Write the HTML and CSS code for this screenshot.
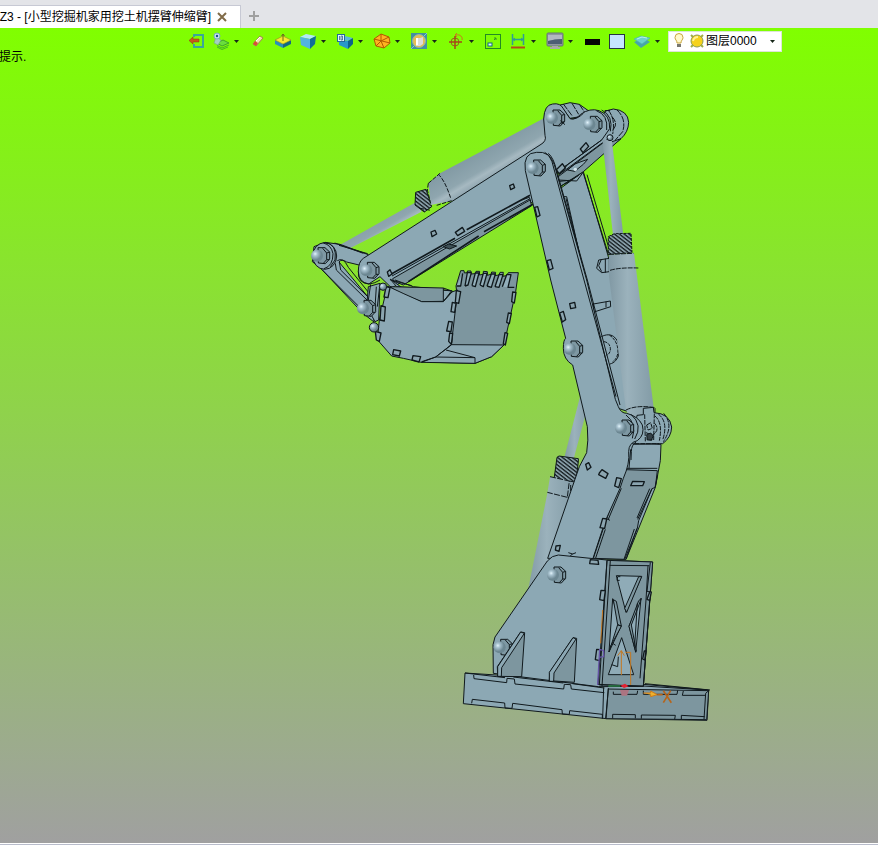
FILE: index.html
```html
<!DOCTYPE html>
<html lang="zh-CN">
<head>
<meta charset="utf-8">
<title>Z3</title>
<link rel="stylesheet" href="styles.css">
</head>
<body>
<header class="tabbar">
  <div class="tab"><span class="tab-title">Z3 - [小型挖掘机家用挖土机摆臂伸缩臂]</span>
    <button class="tab-close" aria-label="关闭"><svg width="10" height="10" viewBox="0 0 10 10"><path d="M1 1L9 9M9 1L1 9" stroke="#806b48" stroke-width="2"/></svg></button>
  </div>
  <button class="tab-add" aria-label="新建"><svg width="12" height="12" viewBox="0 0 12 12"><path d="M6 1V11M1 6H11" stroke="#a0a0a0" stroke-width="2"/></svg></button>
</header>
<main class="viewport">
  <nav class="toolbar">
    <button class="tool" aria-label="退出"><svg class="icon" viewBox="0 0 18 18"><path d="M7 5V3H16V15H7V12" fill="none" stroke="#3aa79a" stroke-width="2"/><path d="M2 8.500L6 5V7H12V10H6V12Z" fill="#c6571c" stroke="#8d3a10" stroke-width=".5"/></svg></button>
    <button class="tool menu" aria-label="管理器"><svg class="icon" viewBox="0 0 18 18"><path d="M5 11L11 8L17 11L10 14Z" fill="#6ade3c" stroke="#3fa52c"/><path d="M5 13.500L10 16L17 13M5 15L10 17.500L16 15" fill="none" stroke="#46b32c"/><path d="M4 5L2 11L6 13L9 8Z" fill="#a5cfc0" stroke="#6da888" stroke-width=".6"/><circle cx="5" cy="4" r="3" fill="#c9e3ed" stroke="#76acc0"/><circle cx="5" cy="4" r="1.200" fill="#164e83"/></svg><svg class="caret" viewBox="0 0 5 3"><path d="M0 0H5L2.500 3Z"/></svg></button>
    <button class="tool" aria-label="擦除"><svg class="icon" viewBox="0 0 18 18"><path d="M4 12L11 4L14 6L7 14Z" fill="#efe0ae" stroke="#a38254"/><path d="M4 12L6 9L9 11L7 14Z" fill="#d75034"/><path d="M7 9L11 5" stroke="#fff"/></svg></button>
    <button class="tool" aria-label="剖面"><svg class="icon" viewBox="0 0 18 18"><path d="M1 8L9 12V16L1 12Z" fill="#2890bb"/><path d="M9 12L17 8V12L9 16Z" fill="#126886"/><path d="M1 8L9 4L17 8L9 12Z" fill="#f8e92e" stroke="#928429" stroke-width=".6"/><path d="M9 9V2M7.500 4L9 2L10.500 4" fill="none" stroke="#6c6723"/></svg></button>
    <button class="tool menu" aria-label="着色"><svg class="icon" viewBox="0 0 18 18"><path d="M1 5L7 2L17 4L11 7Z" fill="#b2e8fa"/><path d="M1 5L11 7V17L2 13Z" fill="#52b4df"/><path d="M11 7L17 4L16 12L11 17Z" fill="#116d98"/></svg><svg class="caret" viewBox="0 0 5 3"><path d="M0 0H5L2.500 3Z"/></svg></button>
    <button class="tool menu" aria-label="视图"><svg class="icon" viewBox="0 0 18 18"><path d="M3 7L9 4L17 6L12 9Z" fill="#5cb9da"/><path d="M3 8L12 9V17L3 13Z" fill="#2898cb"/><path d="M12 9L17 6V12L12 17Z" fill="#0d628c"/><rect x="1.500" y="2.500" width="7" height="7" fill="#e1f5ff" stroke="#23699c"/><path d="M3.500 4V8M5 4H6.500V8H5Z" stroke="#254f79" stroke-width=".7" fill="none"/></svg><svg class="caret" viewBox="0 0 5 3"><path d="M0 0H5L2.500 3Z"/></svg></button>
    <button class="tool menu" aria-label="线框"><svg class="icon" viewBox="0 0 18 18"><path d="M1 7L8 2L16 5L17 11L11 16L3 14Z" fill="#ffb321" stroke="#b35800"/><path d="M1 7L17 11M8 2L8 9L3 14M16 5L8 9L11 16" fill="none" stroke="#b35800"/></svg><svg class="caret" viewBox="0 0 5 3"><path d="M0 0H5L2.500 3Z"/></svg></button>
    <button class="tool menu" aria-label="渲染"><svg class="icon" viewBox="0 0 18 18"><rect x="1" y="1" width="16" height="16" fill="#438fa0"/><path d="M1 17L5 13M17 1L13 5" stroke="#87c8cc"/><circle cx="9" cy="9" r="6.500" fill="#e5bd54" stroke="#8eb8a8"/><path d="M6 6H10L13 5V12L10 14H6Z" fill="#dcdada"/><path d="M7 6V13" stroke="#fff" stroke-width="2"/></svg><svg class="caret" viewBox="0 0 5 3"><path d="M0 0H5L2.500 3Z"/></svg></button>
    <button class="tool menu" aria-label="旋转中心"><svg class="icon" viewBox="0 0 18 18"><circle cx="8" cy="10" r="4" fill="none" stroke="#9c6322"/><path d="M8 4V17M2 10H15" stroke="#a54718" stroke-width="1.500"/><path d="M9 3C13 2 16 5 15 8M10 1L8 3L10 5" fill="none" stroke="#ca791c"/></svg><svg class="caret" viewBox="0 0 5 3"><path d="M0 0H5L2.500 3Z"/></svg></button>
    <button class="tool" aria-label="缩放"><svg class="icon" viewBox="0 0 18 18"><rect x="1.500" y="2.500" width="15" height="14" fill="none" stroke="#238b23"/><rect x="4" y="11" width="4" height="3" fill="#e2f7fd" stroke="#126987"/><path d="M10 8L12 6M10 6H12V8" fill="none" stroke="#369228"/></svg></button>
    <button class="tool menu" aria-label="测量"><svg class="icon" viewBox="0 0 18 18"><path d="M3.500 2V13M14.500 2V13M4 7.500H14" stroke="#2f9c95" stroke-width="1.500"/><path d="M6 6L4 7.500L6 9M12 6L14 7.500L12 9" fill="none" stroke="#2f9c95"/><path d="M2 15.500H16" stroke="#b54c18" stroke-width="2"/></svg><svg class="caret" viewBox="0 0 5 3"><path d="M0 0H5L2.500 3Z"/></svg></button>
    <button class="tool menu" aria-label="显示"><svg class="icon" viewBox="0 0 18 18"><rect x="1" y="1" width="16" height="13" rx="1" fill="#8e979e" stroke="#69757a"/><path d="M2 3H16V7Q9 7 2 9Z" fill="#b2b8c4"/><path d="M2 9Q9 7 16 7V12H2Z" fill="#4d5d74"/><path d="M6 14H12V15H14V17H4V15H6Z" fill="#a8a9a6"/></svg><svg class="caret" viewBox="0 0 5 3"><path d="M0 0H5L2.500 3Z"/></svg></button>
    <button class="tool" aria-label="线宽"><svg class="icon" viewBox="0 0 18 18"><rect x="2" y="7" width="15" height="6" fill="#050505"/></svg></button>
    <button class="tool" aria-label="颜色"><svg class="icon" viewBox="0 0 18 18"><rect x="1.500" y="2.500" width="15" height="14" fill="#c5e5ff" stroke="#243544"/></svg></button>
    <button class="tool menu" aria-label="图层"><svg class="icon" viewBox="0 0 18 18"><path d="M1 10L11 6L17 10L8 16Z" fill="#48a5aa"/><path d="M1 7L8 4L17 6L9 12Z" fill="#6cd0cf" stroke="#4ab6b0" stroke-width=".6"/><path d="M4 7L9 5L14 6" fill="none" stroke="#b8f0e8"/></svg><svg class="caret" viewBox="0 0 5 3"><path d="M0 0H5L2.500 3Z"/></svg></button>
    <div class="layer-box">
      <svg class="icon" viewBox="0 0 18 18"><path d="M7 11C7 8 5 8 5 5.500A4 4 0 0 1 13 5.500C13 8 11 8 11 11Z" fill="#fff9cd" stroke="#c9a63e"/><path d="M7 12H11V15H7Z" fill="#77776f"/></svg>
      <svg class="icon" viewBox="0 0 18 18"><path d="M3 3L15 15M15 3L3 15" stroke="#9fae45" stroke-width="2"/><circle cx="9" cy="9" r="6" fill="#f5d21c" stroke="#8d9b55"/><path d="M5 9Q6 5 10 5" stroke="#fff397" fill="none" stroke-width="2"/></svg>
      <select class="layer-select" aria-label="当前图层"><option>图层0000</option></select>
      <svg class="caret" viewBox="0 0 5 3"><path d="M0 0H5L2.500 3Z"/></svg>
    </div>
  </nav>
  <p class="prompt">提示.</p>
  <svg class="model" viewBox="0 0 1260 1920" role="img" aria-label="挖掘臂模型">
    <defs>
      <linearGradient id="tube"><stop offset="0" stop-color="#8199a4"/><stop offset=".4" stop-color="#9bb2bc"/><stop offset="1" stop-color="#819aa5"/></linearGradient>
      <linearGradient id="tubeUp" gradientUnits="userSpaceOnUse" x1="540" y1="180" x2="590" y2="265"><stop offset="0" stop-color="#829aa4"/><stop offset=".55" stop-color="#8fa6af"/><stop offset=".7" stop-color="#a6b9c1"/><stop offset="1" stop-color="#869da8"/></linearGradient>
      <radialGradient id="ball" cx=".35" cy=".35"><stop offset="0" stop-color="#e2f4fb"/><stop offset=".35" stop-color="#a9c3d0"/><stop offset="1" stop-color="#6c8792"/></radialGradient>
      <pattern id="coil" width="9" height="9" patternUnits="userSpaceOnUse" patternTransform="rotate(38)"><rect width="9" height="9" fill="#8ca4ae"/><path d="M0 4H9" stroke="#141b1e" stroke-width="4"/></pattern>
      <g id="nut"><path d="M-4-24L17-24L31-11L31 10L18 24L-3 22Z" fill="#7e98a3"/><path d="M10-22L22-8V12L12 23M22-8L31-11M22 12L30 12" fill="none"/><circle r="18" cx="-7" fill="url(#ball)" stroke="none"/></g>
    </defs>
    <g class="edge">
      <!-- lower lift cylinder -->
      <g transform="translate(630 1020)">
        <path class="tube" d="M210-100L240-60L225-40L190 90L162 86Z"/>
        <path d="M141 82L147 78L205 86V93L198 158L132 148Z" fill="url(#coil)"/>
        <path class="tube" d="M120 140L200 155L195 220L115 410L50 500L112 190Z"/>
        <path d="M120 140L178 153L172 202L112 187M178 153L200 157L188 202L172 202M182 165V190" fill="none" stroke-dasharray="18 4"/>
      </g>
      <!-- far side of the boom -->
      <g transform="translate(660 0)">
        <path class="flat" d="M115 300L190 245L265 500L325 965L280 950Z"/>
        <path d="M190 250L266 495M201 254L270 486M128 320H140L196 570M138 325L210 620L245 780" fill="none"/>
        <path class="flat" d="M268 505L236 510L230 535L245 548L268 545Z"/><path d="M244 508L236 527L245 545M256 506V548" fill="none"/>
        <path class="flat" d="M220 642L271 633L272 650L222 666Z"/><path d="M258 635V652" fill="none"/>
        <path class="flat" d="M244 740C302 710 318 810 270 822"/><path d="M252 755C278 758 275 795 258 795M268 735C298 754 303 800 278 815" fill="none" stroke-dasharray="10 3"/>
      </g>
      <!-- upper cylinder -->
      <path class="tube-up" d="M110 470L350 335L365 365L140 480Z" fill="#95abb5"/>
      <path d="M347 307L378 298L395 350L373 366L345 345Z" fill="url(#coil)"/>
      <path class="tube-up" d="M385 280L420 250L740 80V190L460 332L392 345Z"/>
      <path d="M385 280L382 300L392 340M385 280L420 250M414 252C432 268 444 300 452 324M410 346L455 332M360 355L392 361" fill="none" stroke-dasharray="13 4"/>
      <!-- bucket link -->
      <path class="flat" d="M42 470L75 457L120 463L205 494L206 532L140 516Q125 505 117 516L220 640L222 696L188 669L65 538L37 515Z"/>
      <path d="M117 466L203 491M104 459L190 490M112 512Q130 500 145 532L220 625M106 520L109 540L204 633M118 516L122 540L206 623M65 538L190 663" fill="none"/>
      <ellipse class="flat" cx="74" cy="498" rx="36" ry="40"/><path d="M76 458Q112 462 105 510L91 530M72 536Q99 528 99 491Q94 465 70 459" fill="none"/>
      <use href="#nut" x="58" y="497"/>
      <!-- stick -->
      <g transform="translate(660 0)">
        <path class="flat" d="M120 45L150 38L178 43L205 62V80H180L150 85ZM257 63L280 57Q324 61 326 97Q325 126 303 146L140 280L100 283Z"/>
        <path d="M130 42L157 78M156 40L176 73M178 43L194 67M264 60Q287 85 278 132M291 60Q320 87 308 125L286 150M275 79Q298 102 276 122" fill="none" stroke-dasharray="20 3"/>
      </g>
      <path class="flat" d="M190 505L720 165Q741 154 735 136L731 87Q733 44 758 42Q781 38 790 56L810 86Q825 91 842 73Q870 53 897 62Q931 74 929 116L905 150L760 254L693 340L275 594L240 560L206 582Q175 576 175 544Q175 515 190 505Z"/>
      <path class="side" d="M278 566L690 330L695 347L310 585L280 573Z"/>
      <path class="heavy" d="M274 552L465 445M500 419L690 316M325 575L536 438M552 425L700 342"/>
      <path d="M276 558L690 326M665 330L688 322L692 333M770 248L905 150M776 258L926 145" fill="none"/>
      <g transform="translate(660 0)">
        <path class="side" d="M106 262L256 152L262 160L303 146L190 245L120 290Z"/>
        <path class="flat" d="M143 240L164 222L203 208L190 223L164 244Z"/>
        <path d="M115 270L170 273L191 245M120 290L176 256M108 265L250 158M100 276L158 270" fill="none"/>
        <circle cx="166" cy="238" r="5" fill="#d4e6ed" stroke="none"/>
      </g>
      <path d="M430 470L446 462L470 468L449 477Z" fill="#3e5056"/>
      <path class="notch" d="M393 426L405 421L410 432L396 440ZM629 287L640 282L644 293L632 299ZM466 427L487 412L494 424L473 437ZM262 546L270 539L276 552L266 559ZM841 177L858 158L866 169L849 188ZM769 239L787 221L796 234L777 251Z"/>
      <path d="M175 544Q173 581 208 582Q225 580 240 570" fill="none"/>
      <use href="#nut" x="206" y="541"/><use href="#nut" x="763" y="84"/><use href="#nut" x="875" y="103"/>
      <path d="M783 100L793 95M781 92L795 104M889 62Q925 74 920 120M905 60Q941 78 931 124M914 62L930 61M812 86Q830 90 850 70" fill="none"/>
      <!-- right cylinder -->
      <g transform="translate(660 0)">
        <path class="tube" d="M247 151L275 148L310 435H279Z"/>
        <path d="M265 440L283 431L333 430L336 488L265 494Z" fill="url(#coil)" stroke-dasharray="9 3"/>
        <path class="tube" d="M267 494L342 489L405 985H330L318 960L267 560Z"/>
        <path d="M267 493L340 490M270 541Q298 532 355 534M318 960Q350 944 405 953L405 975" fill="none" stroke-dasharray="15 3"/>
        <circle cx="270" cy="143" r="9" fill="url(#ball)"/>
      </g>
      <!-- lower boom section -->
      <g transform="translate(870 930)">
        <path class="flat" d="M120 122L213 133L211 182L196 262L150 375L108 478L8 476L85 200Z"/>
        <path class="side" d="M108 209L202 212L196 262L186 266L146 362L142 385L104 478L10 475L78 270Z"/>
        <path d="M130 132H209M108 205H202M94 265L54 360M83 267L50 356M50 356L60 361M46 388L17 474M39 386L9 472M186 266L143 358M179 266L141 354M141 385L108 478M133 387L102 478M122 148L117 205M203 225L195 262" fill="none"/>
        <path class="notch" d="M128 244L163 245L158 257L122 257Z"/>
      </g>
      <g transform="translate(690 540)">
        <path class="flat" d="M372 428Q419 430 425 471Q424 502 398 521L308 522L321 436L340 434V415L370 412Z"/>
        <path d="M385 432Q416 456 398 510M401 430Q433 466 400 515M375 438Q399 458 388 512M344 433L346 514M373 431L371 510M350 465L362 458L367 475L354 480ZM348 488L370 497L365 511L350 507M314 521H387M374 460Q391 480 368 495" fill="none" stroke-dasharray="14 3"/>
        <path d="M350 494L362 489L370 498L364 510H352Z" fill="#354147"/>
      </g>
      <!-- boom -->
      <g transform="translate(660 0)">
        <path class="flat" d="M16 242Q8 188 50 187Q88 182 103 224L200 570L286 928L295 950Q303 970 320 970Q355 979 367 1005Q375 1035 352 1052Q326 1058 326 1085Q330 1120 310 1165L300 1195L255 1295L218 1408L83 1405L178 1130L200 1088Q206 1052 202 1010L158 825Q130 808 130 775Q130 750 137 745L92 570Z"/>
        <path d="M74 187Q88 192 96 215L192 570L288 920M85 190Q101 204 109 239L202 570L300 945M318 975Q351 1000 337 1045M333 973Q370 1005 344 1047M348 1056Q334 1065 334 1085L333 1110" fill="none"/>
        <path class="notch" d="M44 352L53 350L60 376L51 381ZM81 512L92 509L99 535L88 540ZM149 641L164 637L167 653L152 656ZM119 669L130 664L137 689L127 696ZM197 1123L206 1118L213 1132L202 1140ZM238 1149L246 1139L264 1151L257 1165L236 1154ZM290 1163L304 1166L296 1193L284 1188ZM248 1285L260 1287L254 1315L240 1313ZM108 1368L121 1366L117 1384L106 1380Z"/>
        <use href="#nut" x="45" y="234"/><use href="#nut" x="157" y="777"/><use href="#nut" x="310" y="1014"/>
        <path d="M145 1388L158 1392L168 1388M158 1392L151 1397" fill="none"/>
      </g>
      <!-- bucket -->
      <path class="flat" d="M270 567L290 590L455 602L430 635L365 636ZM205 590L240 580L236 690L225 695L200 650Z"/>
      <path d="M212 583L205 630M229 590L224 668M239 588L232 650M270 569L335 587M285 570L340 590L455 603" fill="none"/>
      <path class="side" d="M482 542L492 542L493 549L502 548V543L513 543V552L526 551L528 544L539 544L538 555L550 553V544L562 545V556L573 553L575 546L587 547L584 557L597 555L600 547L610 547L608 559L620 557L625 548L655 548L647 605L612 765L575 800L525 820L400 817L455 760L460 670L470 605L468 588Z"/>
      <path class="side" d="M270 590L430 594V634L365 635L300 610Z"/>
      <path class="flat" d="M262 588Q310 611 365 635H430L455 606L473 600L454 764L414 801L364 817L310 805L275 798L232 749L238 690Z"/>
      <path class="flat" d="M454 764L612 765L575 800L525 820L364 817L407 801Z"/>
      <path d="M455 764L407 801L525 803L438 780M430 594L458 604L430 634M407 801L365 815M525 803V820" fill="none"/>
      <path class="teeth" d="M470 588H482L488 550M495 588L502 548L514 548L504 585L495 588M516 587L526 549L537 549L526 590L516 587M540 585L550 550L561 550L550 590L540 585M561 588L574 552L586 552L574 592L561 588M585 590L597 554L609 554L597 592L585 590M607 590L620 554L633 554L624 592H643"/>
      <path class="notch" d="M258 590L270 593L264 623L252 621ZM243 647L256 651L253 693L240 690ZM226 724L243 729L238 754L229 750ZM281 779L302 783L298 798L278 794ZM339 797L362 800L357 816L336 810ZM457 637L468 640L464 667L453 665ZM446 694L457 696L453 725L440 723ZM449 729L458 731L454 763L446 754ZM469 602L482 605L476 640L466 637ZM638 606L648 607L643 639L635 635ZM625 669L634 670L628 701L620 697ZM615 728L623 730L616 765L610 761Z"/>
      <use href="#nut" x="196" y="655"/><circle cx="222" cy="712" r="14" fill="url(#ball)"/><circle cx="249" cy="590" r="11" fill="url(#ball)"/>
      <!-- pedestal -->
      <g transform="translate(450 1380)">
        <path class="flat" d="M45 369L580 403L776 420L771 511L470 506L40 461Z"/>
        <path class="side" d="M475 417L776 422L770 509L467 506Z"/>
        <path class="flat" d="M130 370L129 284L135 261L292 33Q306 16 325 15L470 30L608 36L580 409L445 410Z"/>
        <path class="side" d="M471 31L608 36L580 409L444 403Z"/>
        <path d="M479 46L598 47M471 31L448 405M481 31L456 408M601 37L591 124L601 126L580 409M594 48L588 150L570 385" fill="none"/>
        <path class="hole" d="M499 77L575 79L528 187ZM488 146L513 229L477 306ZM573 145L537 228L557 307ZM515 263L475 374H551Z"/>
        <path class="side" d="M566 80L575 80L530 187L524 175ZM490 149L499 154L514 228L503 224ZM514 229L482 288L477 306L503 224ZM574 146L566 152L537 229L555 298L559 304L544 225Z"/>
        <path d="M511 80H503L501 91H509M562 160L554 289M488 280L497 286M505 320L503 350L485 344" fill="none"/>
        <path class="notch" d="M453 121L466 122L462 152L449 149ZM440 298L452 299L449 332L436 329ZM421 29L444 31L446 43L419 41ZM600 124L604 126L599 151L591 148ZM583 303L588 303L584 330L578 327Z"/>
        <use href="#nut" x="316" y="75"/><use href="#nut" x="156" y="292"/>
        <path class="side" d="M143 379L142 350L212 246L224 248L215 380ZM298 392L299 367L369 263L380 265L373 397Z"/>
        <path class="flat" d="M143 350L212 246L223 250L155 353L154 379H143ZM298 367L369 263L378 267L312 369L311 394H298Z"/>
        <path d="M45 369L165 383M190 381L340 399M367 401L463 414M71 375L72 386L170 398L171 385L193 387L195 402L341 417L343 403L362 404L364 417L463 428M65 460L67 448L164 459L165 474L186 475L188 460L336 479L337 492L358 493L359 482L457 493V506M461 412L458 505M475 414L468 506M490 425V433H561L563 422M580 422V433H681L683 421M700 423L697 436H766M776 422L767 430L762 508M488 505V493L556 494V505M574 506V495L676 496L674 508M694 508V496L764 500" fill="none"/>
        <path d="M448 405L580 408L770 420M585 401L780 420" fill="none"/>
        <path d="M443 405L449 298L461 302V320L447 322" fill="none" stroke="#6654a7" stroke-width="4"/>
        <path d="M452 280L458 180M514 375V302L503 317M514 302L523 317M526 307H542V405" fill="none" stroke="#c47822"/>
        <path d="M475 408H511" stroke="#32ad54"/><path d="M511 407L525 401L536 409L522 414Z" fill="#e32131" stroke="none"/><path d="M510 420H537L531 437H515Z" fill="#ac7481" stroke="none"/>
        <path d="M580 429H602V423L622 434L602 440V434" fill="#efb12d" stroke="#cf7c19"/><path d="M622 434H638M640 422L664 458M662 422L640 458" fill="none" stroke="#b6651b" stroke-width="5"/>
      </g>
    </g>
  </svg>
</main>
</body>
</html>
```
FILE: styles.css
```css
* { box-sizing: border-box; }
body {
  margin: 0;
  min-height: 100vh;
  display: flex;
  flex-direction: column;
  font: 12px/16px "Liberation Sans", "Noto Sans CJK SC", sans-serif;
  color: #000;
  background: #b8bccb;
}
button { border: 0; padding: 0; background: none; display: flex; align-items: center; }
svg { display: block; flex: none; }

.tabbar {
  display: flex;
  align-items: flex-end;
  height: 28px;
  background: #e3e4e8;
}
.tab {
  display: flex;
  align-items: center;
  gap: 6px;
  width: 241px;
  height: 23px;
  background: #fff;
  border: 1px solid #c7c9d4;
  border-width: 1px 1px 0 0;
}
.tab-title { width: 211px; white-space: nowrap; display: flex; justify-content: flex-end; }
.tab-add { height: 24px; margin-left: 7px; }

.viewport {
  flex: 1;
  display: flex;
  flex-direction: column;
  margin-bottom: 1px;
  border-bottom: 1px solid #fff;
  background: linear-gradient(#80ff00, #a0a0a0);
  overflow: hidden;
}
.toolbar {
  display: flex;
  align-items: center;
  height: 26px;
  padding-left: 187px;
}
.tool { width: 25px; height: 22px; flex: none; }
.tool.menu { width: 37px; gap: 4px; }
.icon { width: 18px; height: 18px; }
.caret { width: 5px; height: 3px; fill: #172718; }
.layer-box {
  display: flex;
  align-items: center;
  width: 114px;
  height: 21px;
  padding: 0 6px 0 1px;
  margin-left: -2px;
  background: #fff;
  border: 1px solid #dce5d6;
}
.layer-select {
  flex: 1;
  min-width: 0;
  height: 18px;
  padding: 0;
  border: 0;
  appearance: none;
  background: none;
  font: inherit;
  color: inherit;
}
.prompt { margin: 0 0 0 -1px; line-height: 6px; }
.model { width: 420px; height: 640px; margin: 30px 0 0 300px; }

.edge { stroke: #10191d; stroke-width: 3; stroke-linejoin: round; }
.flat { fill: #8ca8b4; }
.side { fill: #7d969f; }
.tube { fill: url(#tube); stroke: none; }
.tube-up { fill: url(#tubeUp); stroke: none; }
.notch { fill: #8ba5b0; stroke-width: 4; }
.heavy { fill: none; stroke-width: 5; }
.hole { fill: #8fabb7; }
.teeth { fill: #92aeba; stroke-width: 4; }
```
